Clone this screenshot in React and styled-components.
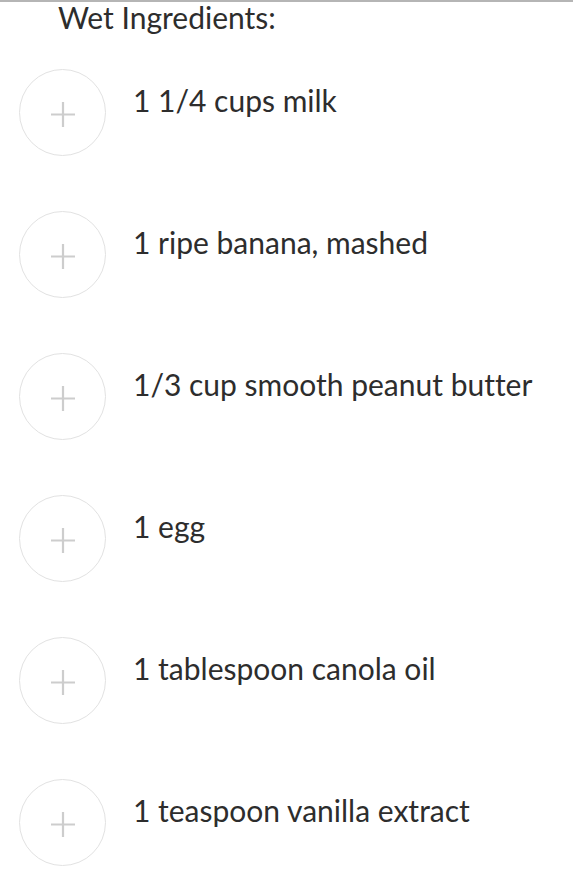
import React from 'react'
import styled, { createGlobalStyle } from 'styled-components'

const GlobalStyle = createGlobalStyle`
  body {
    margin: 0;
    background: #fff;
    font-family: Lato, "Open Sans", sans-serif;
    font-variant-ligatures: none;
    color: #2d2d2d;
  }
`

const Section = styled.section`
  border-top: 2px solid #b5b5b5;
  width: 573px;
`

const Heading = styled.h3`
  margin: 0;
  padding: 0 0 0 58px;
  font-size: 30px;
  font-weight: 400;
  line-height: 30px;
`

const List = styled.ul`
  list-style: none;
  margin: 0;
  padding: 37px 0 0 19px;
  display: flex;
  flex-direction: column;
  gap: 55px;
`

const Row = styled.li`
  display: flex;
  align-items: flex-start;
  gap: 27px;
`

const AddButton = styled.button`
  flex: none;
  width: 87px;
  height: 87px;
  border-radius: 50%;
  border: 1.5px solid #e2e2e2;
  background: #fff;
  padding: 0;
  display: flex;
  align-items: center;
  justify-content: center;
  color: #cdcdcd;
`

const Label = styled.span`
  font-size: 30px;
  line-height: 36px;
  padding-top: 13px;
`

const items = [
  '1 1/4 cups milk',
  '1 ripe banana, mashed',
  '1/3 cup smooth peanut butter',
  '1 egg',
  '1 tablespoon canola oil',
  '1 teaspoon vanilla extract',
]

const Plus = () => (
  <svg width="24" height="25" viewBox="0 0 24 25" style={{ marginTop: 3 }}>
    <path d="M12 0v25M0 12.5h24" stroke="currentColor" strokeWidth="2.2" fill="none" />
  </svg>
)

const App = () => {
  return (
    <>
      <GlobalStyle />
      <Section>
        <Heading>Wet Ingredients:</Heading>
        <List>
          {items.map((item, index) => (
            <Row key={index}>
              <AddButton aria-label="add">
                <Plus />
              </AddButton>
              <Label>{item}</Label>
            </Row>
          ))}
        </List>
      </Section>
    </>
  )
}

export default App
